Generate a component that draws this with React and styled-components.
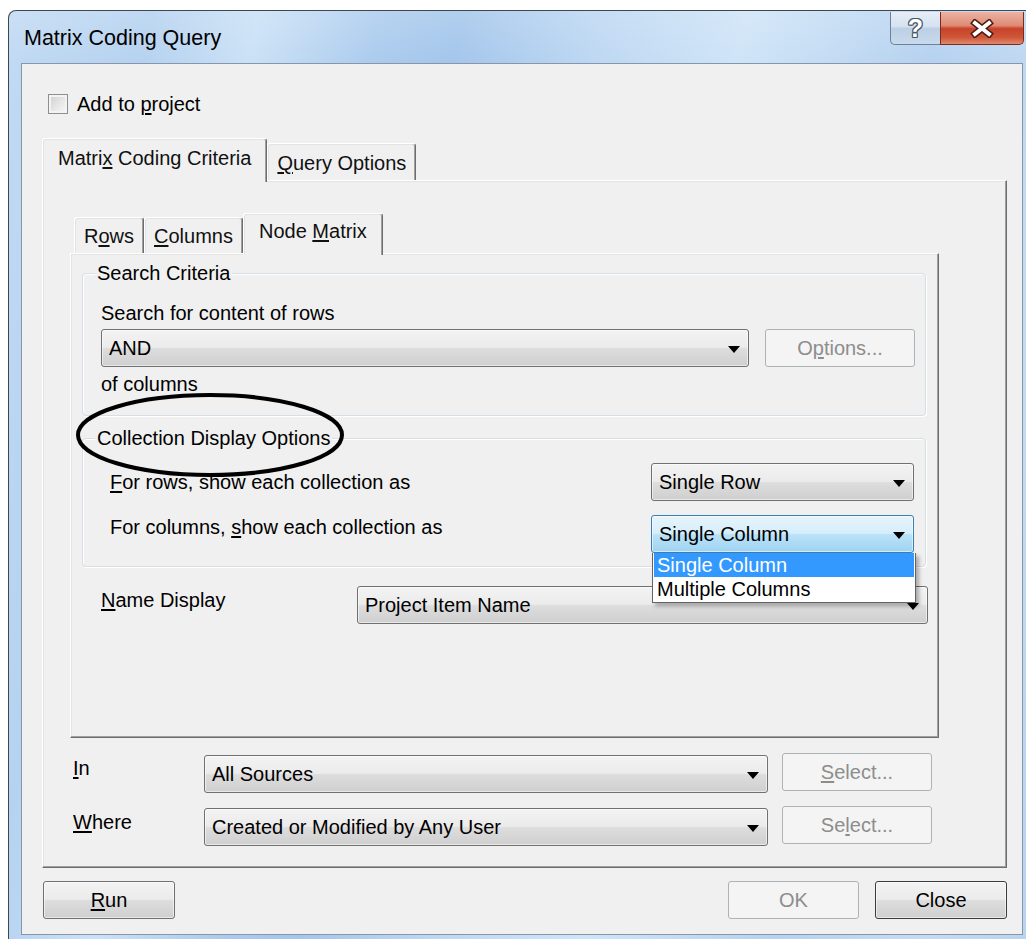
import React from 'react';
import styled, { createGlobalStyle } from 'styled-components';

const GlobalStyle = createGlobalStyle`
  html, body {
    margin: 0;
    padding: 0;
    background: #fff;
    overflow: hidden;
  }
  body {
    font-family: "Liberation Sans", Arial, sans-serif;
    font-size: 20px;
    color: #000;
  }
`;

const greyFace = 'linear-gradient(#f3f3f3 0%, #ebebeb 48%, #dddddd 52%, #cfcfcf 100%)';
const blueFace = 'linear-gradient(#e6f4fc 0%, #d6eefb 48%, #b9e2f8 52%, #9fd3f1 100%)';

function App() {
  return (
    <>
      <GlobalStyle />
      <Window>
        <TitleBar>
          <Title>Matrix Coding Query</Title>
          <CaptionButtons>
            <HelpButton>?</HelpButton>
            <CloseButton>
              <svg width="24" height="19" viewBox="0 0 24 19">
                <path d="M5 4 L19 15 M19 4 L5 15" stroke="#4b1a12" strokeWidth="7" strokeLinecap="square" />
                <path d="M5 4 L19 15 M19 4 L5 15" stroke="#fff" strokeWidth="4" strokeLinecap="square" />
              </svg>
            </CloseButton>
          </CaptionButtons>
        </TitleBar>

        <Client>
          <CheckRow>
            <CheckBox />
            <span>Add to <U>p</U>roject</span>
          </CheckRow>

          <Body>
            <TabStrip>
              <Tab $active $h={44} $pt={7}>Matri<U>x</U> Coding Criteria</Tab>
              <Tab $h={37} $pt={7}><U>Q</U>uery Options</Tab>
            </TabStrip>

            <Panel>
              <TabStrip $inset={4}>
                <Tab $h={36} $pt={6}>R<U>o</U>ws</Tab>
                <Tab $h={36} $pt={6}><U>C</U>olumns</Tab>
                <Tab $active $h={42} $pt={5}>Node <U>M</U>atrix</Tab>
              </TabStrip>

              <InnerPanel>
                <Group $mt={19} $pad="0 11px 19px 18px">
                  <GroupTitle $ml={-6}>Search Criteria</GroupTitle>
                  <Line $mt={16}>Search for content of rows</Line>
                  <ControlRow $mt={4}>
                    <Combo $w={648}>
                      <ComboValue>AND</ComboValue>
                      <Arrow />
                    </Combo>
                    <Button disabled $w={150} $ml={16}>O<U>p</U>tions...</Button>
                  </ControlRow>
                  <Line $mt={5}>of columns</Line>
                </Group>

                <Group $mt={22} $pad="0 11px 13px 27px">
                  <GroupTitle $ml={-15}>Collection Display Options</GroupTitle>
                  <ControlRow $mt={13}>
                    <Label $pt={7}><U>F</U>or rows, show each collection as</Label>
                    <Combo $w={263} $push>
                      <ComboValue>Single Row</ComboValue>
                      <Arrow />
                    </Combo>
                  </ControlRow>
                  <ControlRow $mt={14}>
                    <Label $pt={0}>For columns, <U>s</U>how each collection as</Label>
                    <ComboWrap>
                      <Combo $w={263} $focused>
                        <ComboValue>Single Column</ComboValue>
                        <Arrow />
                      </Combo>
                      <DropList>
                        <DropItem $selected>Single Column</DropItem>
                        <DropItem>Multiple Columns</DropItem>
                      </DropList>
                    </ComboWrap>
                  </ControlRow>
                </Group>

                <NameRow>
                  <Label $w={256} $pt={2}><U>N</U>ame Display</Label>
                  <Combo $w={571}>
                    <ComboValue>Project Item Name</ComboValue>
                    <Arrow />
                  </Combo>
                </NameRow>

                <Annotation width="270" height="86" viewBox="0 0 270 86">
                  <ellipse cx="135" cy="43" rx="132" ry="40" fill="none" stroke="#000" strokeWidth="4" />
                </Annotation>
              </InnerPanel>

              <FilterRow $mt={15}>
                <Label $w={131} $pt={3}><U>I</U>n</Label>
                <Combo $w={564} $mt={2}>
                  <ComboValue>All Sources</ComboValue>
                  <Arrow />
                </Combo>
                <Button disabled $w={150} $ml={14}><U>S</U>elect...</Button>
              </FilterRow>
              <FilterRow $mt={13}>
                <Label $w={131} $pt={4}><U>W</U>here</Label>
                <Combo $w={564} $mt={2}>
                  <ComboValue>Created or Modified by Any User</ComboValue>
                  <Arrow />
                </Combo>
                <Button disabled $w={150} $ml={14}>Se<U>l</U>ect...</Button>
              </FilterRow>
            </Panel>

            <ButtonRow>
              <Button $w={132} $ml={1}><U>R</U>un</Button>
              <Spacer />
              <Button disabled $w={131}>OK</Button>
              <Button $default $w={132} $ml={16}>Close</Button>
            </ButtonRow>
          </Body>
        </Client>
      </Window>
    </>
  );
}
export default App;

const Window = styled.div`
  box-sizing: border-box;
  display: flex;
  flex-direction: column;
  margin: 10px 0 0 8px;
  width: 1028px;
  height: 940px;
  border: 1px solid #3d4754;
  border-bottom: none;
  border-radius: 8px 8px 0 0;
  background:
    linear-gradient(180deg, rgba(255, 255, 255, 0.15) 0, rgba(255, 255, 255, 0) 52px),
    linear-gradient(100deg, #c2daf3 0%, #b5d2f0 12%, #cbe1f6 21%, #acccee 31%, #a4c6eb 38%,
      #bed8f3 50%, #cfe4f7 62%, #b6d2f0 78%, #c4dbf4 90%, #b8d3ef 100%);
`;

const TitleBar = styled.div`
  display: flex;
  align-items: flex-start;
  height: 52px;
  flex-shrink: 0;
`;

const Title = styled.div`
  margin: 14px 0 0 15px;
  font-size: 21.5px;
  line-height: 26px;
  color: #000;
`;

const CaptionButtons = styled.div`
  display: flex;
  margin: 1px 11px 0 auto;
  height: 33px;
`;

const HelpButton = styled.div`
  box-sizing: border-box;
  width: 50px;
  height: 33px;
  display: flex;
  align-items: center;
  justify-content: center;
  padding-bottom: 1px;
  border: 1px solid #6f8199;
  border-top: none;
  border-right: none;
  border-radius: 0 0 0 5px;
  background: linear-gradient(#e6eef8 0%, #d5e2f0 45%, #bccfe4 52%, #c9daec 100%);
  font-family: "Liberation Sans", Arial, sans-serif;
  font-weight: bold;
  font-size: 25px;
  line-height: 26px;
  color: #fff;
  text-shadow: 1px 0 #4a5564, -1px 0 #4a5564, 0 1px #4a5564, 0 -1px #4a5564,
    1px 1px #4a5564, -1px -1px #4a5564, 1px -1px #4a5564, -1px 1px #4a5564;
`;

const CloseButton = styled.div`
  box-sizing: border-box;
  width: 84px;
  height: 33px;
  display: flex;
  align-items: center;
  justify-content: center;
  border: 1px solid #7a2b1d;
  border-top: none;
  border-radius: 0 0 5px 0;
  background: linear-gradient(#ebb3a4 0%, #df8b74 42%, #c7432a 52%, #cf573a 80%, #e08a6c 100%);
`;

const Client = styled.div`
  box-sizing: border-box;
  display: flex;
  flex-direction: column;
  margin-left: 12px;
  width: 1002px;
  height: 872px;
  border: 1px solid #8797a9;
  background: #f0f0f0;
`;

const CheckRow = styled.label`
  display: flex;
  align-items: center;
  gap: 9px;
  height: 21px;
  margin: 29px 0 0 26px;
  line-height: 24px;
`;

const CheckBox = styled.span`
  box-sizing: border-box;
  width: 20px;
  height: 20px;
  border: 1px solid #8e8f8f;
  background: linear-gradient(135deg, #cfcfcf 0%, #e9e9e9 60%, #f7f7f7 100%);
  box-shadow: inset 0 0 0 2px #f3f3f3;
`;

const U = styled.u`
  text-decoration-thickness: 1.5px;
  text-underline-offset: 2px;
`;

const Body = styled.div`
  display: flex;
  flex-direction: column;
  width: 965px;
  margin: 24px 0 0 20px;
`;

const TabStrip = styled.div`
  display: flex;
  align-items: flex-end;
  padding-left: ${(p) => p.$inset || 0}px;
  position: relative;
  z-index: 1;
`;

const Tab = styled.div`
  box-sizing: border-box;
  height: ${(p) => p.$h}px;
  padding: ${(p) => p.$pt}px ${(p) => (p.$active ? 15 : 9)}px 0;
  margin-bottom: ${(p) => (p.$active ? -2 : 0)}px;
  border: 1px solid;
  border-bottom: none;
  border-color: #fff #6d6d6d #6d6d6d #fff;
  border-radius: 3px 3px 0 0;
  background: #f0f0f0;
  box-shadow: inset -1px 0 #a0a0a0, inset 1px 1px #e3e3e3;
  line-height: 24px;
  white-space: nowrap;
  color: #111;
`;

const Panel = styled.div`
  box-sizing: border-box;
  display: flex;
  flex-direction: column;
  height: 688px;
  padding: 32px 0 0 27px;
  border: 1px solid;
  border-color: #fff #6d6d6d #6d6d6d #fff;
  box-shadow: inset -1px -1px #a0a0a0, inset 1px 1px #e3e3e3;
`;

const InnerPanel = styled(Panel)`
  position: relative;
  width: 869px;
  height: 485px;
  padding: 0;
`;

const Group = styled.div`
  box-sizing: border-box;
  display: flex;
  flex-direction: column;
  width: 844px;
  margin: ${(p) => p.$mt}px 0 0 11px;
  padding: ${(p) => p.$pad};
  border: 1px solid #d5dfe5;
  border-radius: 4px;
  box-shadow: inset 1px 1px #fff, 1px 1px #fff;
`;

const GroupTitle = styled.div`
  align-self: flex-start;
  margin: -13px 0 0 ${(p) => p.$ml}px;
  padding: 0 2px;
  background: #f0f0f0;
  line-height: 24px;
`;

const Line = styled.div`
  margin-top: ${(p) => p.$mt}px;
  line-height: 24px;
`;

const ControlRow = styled.div`
  display: flex;
  align-items: flex-start;
  height: 38px;
  margin-top: ${(p) => p.$mt}px;
`;

const Label = styled.div`
  width: ${(p) => (p.$w ? `${p.$w}px` : 'auto')};
  flex-shrink: 0;
  padding-top: ${(p) => p.$pt}px;
  line-height: 24px;
  white-space: nowrap;
`;

const ComboWrap = styled.div`
  position: relative;
  margin-left: auto;
`;

const Combo = styled.div`
  box-sizing: border-box;
  display: flex;
  align-items: center;
  width: ${(p) => p.$w}px;
  height: 38px;
  margin-top: ${(p) => p.$mt || 0}px;
  margin-left: ${(p) => (p.$push ? 'auto' : '0')};
  padding: 0 8px 0 7px;
  border: 1px solid ${(p) => (p.$focused ? '#3c7fb1' : '#707070')};
  border-radius: 3px;
  background: ${(p) => (p.$focused ? blueFace : greyFace)};
  box-shadow: inset 0 0 0 1px rgba(255, 255, 255, 0.55);
  line-height: 24px;
  flex-shrink: 0;
`;

const ComboValue = styled.span`
  flex: 1;
  white-space: nowrap;
  overflow: hidden;
`;

const Arrow = styled.span`
  width: 0;
  height: 0;
  border-left: 6px solid transparent;
  border-right: 6px solid transparent;
  border-top: 7px solid #000;
  margin-top: 2px;
`;

const DropList = styled.div`
  position: absolute;
  top: 38px;
  left: 1px;
  z-index: 4;
  box-sizing: border-box;
  width: 264px;
  padding: 0 1px 1px;
  border: 1px solid #646464;
  border-top: none;
  background: #fff;
  box-shadow: 3px 3px 4px rgba(0, 0, 0, 0.3);
`;

const DropItem = styled.div`
  height: 24px;
  padding-left: 3px;
  line-height: 24px;
  white-space: nowrap;
  background: ${(p) => (p.$selected ? '#3399ff' : '#fff')};
  color: ${(p) => (p.$selected ? '#fff' : '#000')};
`;

const NameRow = styled.div`
  display: flex;
  align-items: flex-start;
  margin: 19px 0 0 30px;
`;

const Annotation = styled.svg`
  position: absolute;
  left: 4px;
  top: 138px;
  z-index: 3;
  pointer-events: none;
`;

const FilterRow = styled.div`
  display: flex;
  align-items: flex-start;
  height: 40px;
  margin-top: ${(p) => p.$mt}px;
  padding-left: 3px;
`;

const Button = styled.button`
  box-sizing: border-box;
  width: ${(p) => p.$w}px;
  height: 38px;
  margin: 0 0 0 ${(p) => p.$ml || 0}px;
  padding: 0;
  font-family: inherit;
  font-size: 20px;
  line-height: 24px;
  border: 1px solid ${(p) => (p.disabled ? '#adb2b5' : p.$default ? '#3c3c3c' : '#707070')};
  border-radius: 3px;
  background: ${(p) => (p.disabled ? '#f4f4f4' : greyFace)};
  box-shadow: inset 0 0 0 1px rgba(255, 255, 255, ${(p) => (p.disabled ? 0 : 0.55)});
  color: ${(p) => (p.disabled ? '#8d8d8d' : '#000')};
  flex-shrink: 0;
`;

const ButtonRow = styled.div`
  display: flex;
  align-items: flex-start;
  margin-top: 13px;
`;

const Spacer = styled.div`
  flex: 1;
`;
